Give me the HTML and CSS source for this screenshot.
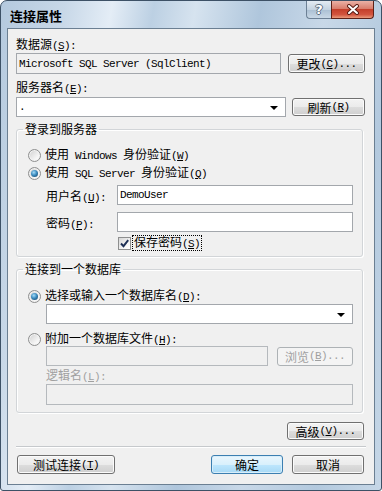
FILE: index.html
```html
<!DOCTYPE html>
<html lang="zh-CN">
<head>
  <meta charset="UTF-8">
  <title>连接属性</title>
  <link rel="stylesheet" href="styles.css">
</head>
<body>

<div class="win">
  <div class="titlebar">
    <span class="title">连接属性</span>
    <div class="caps">
      <span class="cap help">?</span>
      <span class="cap close">
        <svg width="14" height="11" viewBox="0 0 14 11">
          <path d="M3 2 L11 9 M11 2 L3 9" stroke="#5a1e16" stroke-width="4" stroke-linecap="round"/>
          <path d="M3 2 L11 9 M11 2 L3 9" stroke="#fff" stroke-width="2" stroke-linecap="round"/>
        </svg>
      </span>
    </div>
  </div>

  <div class="client">
    <div class="lbl">数据源<span class="en">(<u>S</u>):</span></div>
    <div class="row r1">
      <div class="tb ro src"><span class="en">Microsoft SQL Server (SqlClient)</span></div>
      <button class="btn b-change">更改<span class="en">(<u>C</u>)...</span></button>
    </div>

    <div class="lbl lbl2">服务器名<span class="en">(<u>E</u>):</span></div>
    <div class="row r2">
      <div class="tb combo server"><span class="en">.</span><i class="arrow"></i></div>
      <button class="btn b-refresh">刷新<span class="en">(<u>R</u>)</span></button>
    </div>

    <!-- 登录 -->
    <fieldset class="group g1">
      <legend>登录到服务器</legend>
      <div class="opt opt1"><span class="radio"></span><span>使用<span class="en"> Windows </span>身份验证<span class="en">(<u>W</u>)</span></span></div>
      <div class="opt opt2"><span class="radio on"></span><span>使用<span class="en"> SQL Server </span>身份验证<span class="en">(<u>Q</u>)</span></span></div>
      <div class="field f-user">
        <span class="flabel">用户名<span class="en">(<u>U</u>):</span></span>
        <div class="tb cred"><span class="en">DemoUser</span></div>
      </div>
      <div class="field f-pass">
        <span class="flabel">密码<span class="en">(<u>P</u>):</span></span>
        <div class="tb cred"></div>
      </div>
      <div class="check-row">
        <span class="check">
          <svg width="11" height="11" viewBox="0 0 11 11"><path d="M2 5.5 L4.5 8.2 L9.2 2.2" fill="none" stroke="#1d2f55" stroke-width="1.9"/></svg>
        </span>
        <span class="focus">保存密码<span class="en">(<u>S</u>)</span></span>
      </div>
    </fieldset>

    <!-- 数据库 -->
    <fieldset class="group g2">
      <legend>连接到一个数据库</legend>
      <div class="opt opt3"><span class="radio on"></span><span>选择或输入一个数据库名<span class="en">(<u>D</u>):</span></span></div>
      <div class="tb combo dbname"><i class="arrow"></i></div>
      <div class="opt opt4"><span class="radio"></span><span>附加一个数据库文件<span class="en">(<u>H</u>):</span></span></div>
      <div class="row r-file">
        <div class="tb off file"></div>
        <button class="btn off b-browse">浏览<span class="en">(<u>B</u>)...</span></button>
      </div>
      <div class="opt muted"><span>逻辑名<span class="en">(<u>L</u>):</span></span></div>
      <div class="tb off logical"></div>
    </fieldset>

    <button class="btn b-adv">高级<span class="en">(<u>V</u>)...</span></button>

    <div class="sep"></div>

    <div class="row footer">
      <button class="btn b-test">测试连接<span class="en">(<u>T</u>)</span></button>
      <div class="footer-right">
        <button class="btn default">确定</button>
        <button class="btn b-cancel">取消</button>
      </div>
    </div>
  </div>
</div>

</body>
</html>
```

FILE: styles.css
```css
* { box-sizing: border-box; }

body {
  margin: 0;
  background: #fff;
}

.win {
  width: 382px;
  height: 491px;
  border: 1px solid #3d5166;
  border-radius: 7px 7px 3px 3px;
  overflow: hidden;
  display: flex;
  flex-direction: column;
  font-family: "Noto Sans CJK SC", sans-serif;
  font-size: 12px;
  color: #000;
  background: linear-gradient(100deg, #b4c9de 0%, #c8d8e8 14%, #e4edf6 24%, #bcd0e3 33%, #d6e3ef 42%, #afc6dc 56%, #c8d8e8 70%, #b3c9de 86%, #c6d7e7 100%);
}

/* title bar */
.titlebar {
  height: 27px;
  display: flex;
  align-items: flex-start;
  padding-left: 9px;
}
.title {
  font-weight: bold;
  font-size: 13px;
  line-height: 16px;
  margin-top: 7px;
}
.caps {
  margin-left: auto;
  margin-right: 7px;
  display: flex;
}
.cap {
  height: 18px;
  display: flex;
  align-items: center;
  justify-content: center;
}
.help {
  width: 25px;
  border: 1px solid #6c8095;
  border-top: none;
  border-right: none;
  border-radius: 0 0 0 4px;
  background: linear-gradient(#e3ebf3, #c4d3e1 50%, #aabfd3 51%, #c9d8e6);
  font-family: "DejaVu Sans", sans-serif;
  font-weight: bold;
  font-size: 13px;
  color: #fff;
  text-shadow: 1px 0 #5d6f82, -1px 0 #5d6f82, 0 1px #5d6f82, 0 -1px #5d6f82;
}
.close {
  width: 43px;
  border: 1px solid #5d2118;
  border-top: none;
  border-radius: 0 0 4px 0;
  background: linear-gradient(#eab1a6, #d87d6c 45%, #c43f2b 50%, #d2553f 80%, #e99a7c);
}

/* client area */
.client {
  margin: 0 6px;
  height: 457px;
  border: 1px solid #6b7f92;
  background: #f0f0f0;
  padding: 7px 8px 0 8px;
  display: flex;
  flex-direction: column;
}

.en {
  font-family: "Liberation Mono", monospace;
  font-size: 11px;
  letter-spacing: -0.6px;
  white-space: pre;
}

.lbl {
  height: 16px;
  line-height: 16px;
}
.lbl2 { margin-top: 5px; }

.row {
  display: flex;
  align-items: center;
  justify-content: space-between;
}
.r1 { margin-top: 1px; height: 21px; }
.r2 { margin-top: 2px; height: 20px; }

/* text boxes */
.tb {
  height: 20px;
  border: 1px solid #a3a7ac;
  background: #fff;
  display: flex;
  align-items: center;
  padding-left: 2px;
  position: relative;
}
.tb.ro {
  background: #f0f0f0;
  height: 21px;
}
.tb.off {
  background: #f0f0f0;
  border-color: #b5b9bd;
}
.src { width: 265px; }
.server { width: 270px; }
.arrow {
  position: absolute;
  right: 7px;
  top: 8px;
  width: 0;
  height: 0;
  border-left: 4px solid transparent;
  border-right: 4px solid transparent;
  border-top: 4px solid #000;
}

/* buttons */
.btn {
  font: inherit;
  height: 19px;
  padding: 0;
  border: 1px solid #707070;
  border-radius: 3px;
  background: linear-gradient(#f3f3f3, #ebebeb 50%, #dddddd 51%, #cfcfcf);
  box-shadow: inset 0 0 0 1px #fbfbfb;
  color: #000;
  display: flex;
  align-items: center;
  justify-content: center;
}
.btn.off {
  border-color: #adb2b5;
  background: #f4f4f4;
  color: #a0a0a0;
  box-shadow: none;
}
.btn.default {
  border-color: #3c7fb1;
  background: linear-gradient(#eaf6fd, #d9f0fc 50%, #bee6fd 51%, #a7d9f5);
  box-shadow: inset 0 0 0 1px #d8eefa;
}
.b-change { width: 77px; margin-right: 1px; }
.b-refresh { width: 73px; margin-right: 1px; height: 18px; }

/* group boxes */
.group {
  margin: 4px 0 0 0;
  width: 347px;
  padding: 0;
  border: 1px solid #d2d5d8;
  border-radius: 3px;
  box-shadow: inset 1px 1px 0 #fff, 1px 1px 0 #fff;
  min-inline-size: 0;
}
.group legend {
  margin-left: 6px;
  padding: 0 2px;
  line-height: 16px;
}

.opt {
  height: 14px;
  line-height: 14px;
  display: flex;
  align-items: center;
  margin-left: 11px;
}
.opt1 { margin-top: 11px; }
.opt2 { margin-top: 4px; }
.opt3 { margin-top: 12px; }
.opt4 { margin-top: 8px; }

.radio {
  width: 13px;
  height: 13px;
  margin-right: 4px;
  border-radius: 50%;
  border: 1px solid #8e8f8f;
  background: linear-gradient(135deg, #cfcfcf, #f6f6f6 70%, #fff);
  box-shadow: inset 0 0 0 1px #f2f2f2;
  position: relative;
  flex: none;
}
.radio.on::after {
  content: "";
  position: absolute;
  left: 2px;
  top: 2px;
  width: 7px;
  height: 7px;
  border-radius: 50%;
  background: radial-gradient(circle at 40% 35%, #a6dcf8, #3c8cc0 45%, #1d4f75 85%);
}

.field {
  display: flex;
  align-items: center;
  margin-left: 29px;
}
.f-user { margin-top: 5px; }
.f-pass { margin-top: 7px; }
.flabel { width: 71px; }
.cred { width: 236px; }

.check-row {
  display: flex;
  align-items: center;
  height: 14px;
  margin: 4px 0 0 101px;
}
.check {
  width: 13px;
  height: 13px;
  border: 1px solid #8e8f8f;
  background: linear-gradient(135deg, #d6d6d6, #f7f7f7 70%, #fff);
  display: flex;
  align-items: center;
  justify-content: center;
  margin-right: 2px;
}
.focus {
  outline: 1px dotted #000;
  line-height: 12px;
  padding: 0 1px;
}

.g1 { padding-bottom: 6px; }
.g2 { padding-bottom: 7px; }

.dbname {
  margin: 1px 0 0 29px;
  width: 307px;
}
.r-file {
  margin-left: 29px;
  width: 307px;
}
.file { width: 222px; }
.b-browse { width: 76px; }

.muted {
  color: #a0a0a0;
  margin-left: 29px;
  margin-top: 3px;
}
.logical {
  margin: 1px 0 0 29px;
  width: 307px;
  height: 21px;
}

.b-adv {
  width: 77px;
  height: 18px;
  margin-top: 9px;
  margin-right: 2px;
  align-self: flex-end;
}

.sep {
  margin-top: 6px;
  border-top: 1px solid #c6c9cc;
  border-bottom: 1px solid #fff;
}

.footer {
  margin-top: 7px;
  height: 19px;
}
.b-test { width: 98px; margin-left: 1px; }
.footer-right {
  display: flex;
  gap: 9px;
  margin-right: 2px;
}
.footer-right .btn { width: 72px; }
```
